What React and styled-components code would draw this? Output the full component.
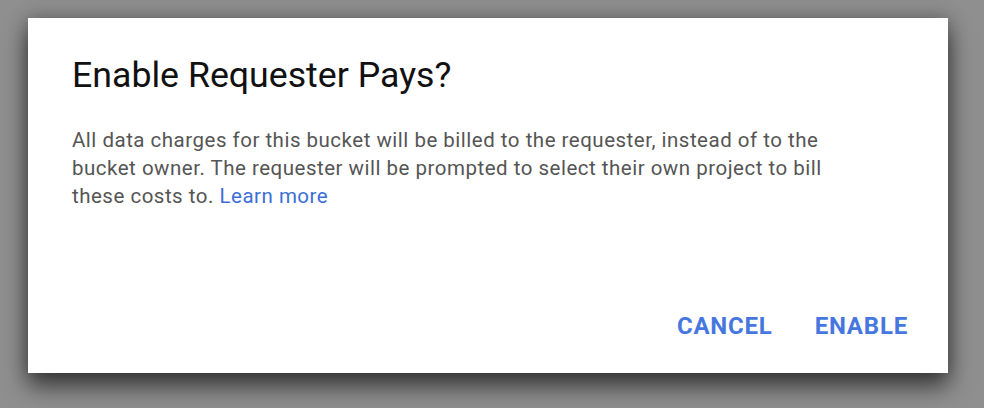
import React from "react";
import styled, { createGlobalStyle } from "styled-components";

const Global = createGlobalStyle`
  html, body { margin: 0; padding: 0; }
  body {
    background: #8f8f8f;
    width: 984px;
    height: 408px;
    overflow: hidden;
    font-family: Roboto, "Liberation Sans", Arial, sans-serif;
  }
`;

const Backdrop = styled.div`
  padding: 18px 36px 0 28px;
`;

const Dialog = styled.div`
  width: 920px;
  height: 355px;
  box-sizing: border-box;
  background: #ffffff;
  box-shadow: 0 14px 22px rgba(0, 0, 0, 0.55), 0 0 18px rgba(0, 0, 0, 0.3);
  padding: 35px 32px 25px 44px;
  display: flex;
  flex-direction: column;
`;

const Title = styled.h2`
  margin: 0;
  font-family: Roboto, "Liberation Sans", Arial, sans-serif;
  font-weight: 400;
  font-size: 35.7px;
  line-height: 44px;
  color: #111;
`;

const Body = styled.p`
  margin: 29px 0 0;
  font-size: 20.5px;
  line-height: 28px;
  letter-spacing: 0.5px;
  color: #555555;
  width: 800px;
`;

const Link = styled.a`
  color: #3c6ed8;
  text-decoration: none;
`;

const Actions = styled.div`
  margin-top: auto;
  display: flex;
  justify-content: flex-end;
  gap: 26px;
`;

const Button = styled.button`
  border: none;
  background: transparent;
  padding: 8px 8px;
  font-family: Roboto, "Liberation Sans", Arial, sans-serif;
  font-weight: 700;
  font-size: 24px;
  line-height: 28px;
  letter-spacing: 0.8px;
  color: #4677df;
  text-transform: uppercase;
  cursor: pointer;
`;

export default function App() {
  return (
    <>
      <Global />
      <Backdrop>
        <Dialog>
          <Title>Enable Requester Pays?</Title>
          <Body>
            All data charges for this bucket will be billed to the requester, instead of to the
            bucket owner. The requester will be prompted to select their own project to bill
            these costs to. <Link href="#">Learn more</Link>
          </Body>
          <Actions>
            <Button>Cancel</Button>
            <Button>Enable</Button>
          </Actions>
        </Dialog>
      </Backdrop>
    </>
  );
}
